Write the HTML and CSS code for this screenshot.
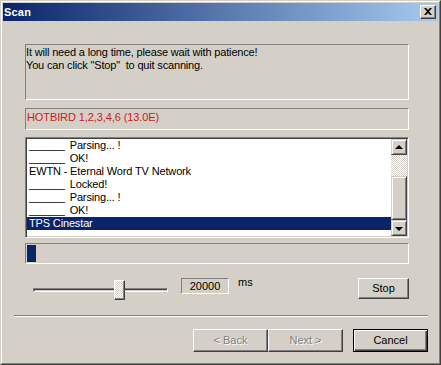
FILE: index.html
```html
<!DOCTYPE html>
<html>
<head>
<meta charset="utf-8">
<title>Scan</title>
<link rel="stylesheet" href="styles.css">
</head>
<body>
<div class="window">
  <div class="frame">
    <div class="titlebar">
      <span class="title">Scan</span>
      <div class="close">
        <svg width="8" height="7" viewBox="0 0 8 7"><path d="M0 0h2l2 2 2-2h2L5 3.5 8 7H6L4 5 2 7H0l3-3.5z" fill="#000"/></svg>
      </div>
    </div>
    <div class="client">
      <div class="content">
        <div class="static msg">It will need a long time, please wait with patience!<br>You can click "Stop"&nbsp; to quit scanning.</div>
        <div class="static sat">HOTBIRD 1,2,3,4,6 (13.0E)</div>
        <div class="list">
          <div class="items">
            <div class="item"><span class="dash">______</span> Parsing... !</div>
            <div class="item"><span class="dash">______</span> OK!</div>
            <div class="item">EWTN - Eternal Word TV Network</div>
            <div class="item"><span class="dash">______</span> Locked!</div>
            <div class="item"><span class="dash">______</span> Parsing... !</div>
            <div class="item"><span class="dash">______</span> OK!</div>
            <div class="item selected">TPS Cinestar</div>
          </div>
          <div class="scrollbar">
            <div class="sbtn"><span class="arrow up"></span></div>
            <div class="track"></div>
            <div class="thumb"></div>
            <div class="sbtn"><span class="arrow down"></span></div>
          </div>
        </div>
        <div class="static progress"><div class="block"></div></div>
        <div class="controls">
          <div class="slider">
            <div class="rail"></div>
            <div class="knob" style="left:81px"></div>
          </div>
          <div class="static edit">20000</div>
          <div class="unit">ms</div>
          <div class="btn stop">Stop</div>
        </div>
      </div>
      <div class="sep"></div>
      <div class="buttons">
        <div class="btn disabled">&lt; Back</div>
        <div class="btn disabled">Next &gt;</div>
        <div class="btn default">Cancel</div>
      </div>
    </div>
  </div>
</div>
</body>
</html>
```
FILE: styles.css
```css
html, body {
  margin: 0;
  padding: 0;
  background: #d4d0c8;
}
body {
  font-family: "Liberation Sans", Arial, sans-serif;
  font-size: 11px;
  color: #000;
}
.window {
  width: 441px;
  height: 365px;
  box-sizing: border-box;
  border: 1px solid;
  border-color: #d4d0c8 #404040 #404040 #d4d0c8;
  background: #d4d0c8;
}
.frame {
  height: 100%;
  box-sizing: border-box;
  border: 1px solid;
  border-color: #fff #808080 #808080 #fff;
  padding: 1px;
  display: flex;
  flex-direction: column;
}
.titlebar {
  height: 18px;
  margin-bottom: 1px;
  background: linear-gradient(to right, #0a246a 0%, #a6caf0 100%);
  display: flex;
  align-items: center;
  justify-content: space-between;
  padding: 0 2px 0 1px;
}
.title {
  color: #fff;
  font-weight: bold;
  font-size: 11px;
  letter-spacing: 0.2px;
}
.close {
  width: 16px;
  height: 14px;
  box-sizing: border-box;
  background: #d4d0c8;
  border: 1px solid;
  border-color: #fff #404040 #404040 #fff;
  box-shadow: inset -1px -1px #808080;
  display: flex;
  align-items: center;
  justify-content: center;
  padding: 0 1px 1px 0;
}
.close svg { display: block; }
.client {
  flex: 1;
  display: flex;
  flex-direction: column;
}
.content {
  padding: 22px 0 0 22px;
  width: 384px;
}
.static {
  box-sizing: border-box;
  border: 1px solid;
  border-color: #808080 #fff #fff #808080;
}
.msg {
  height: 56px;
  line-height: 13px;
  padding: 1px 0 0 0;
  letter-spacing: -0.17px;
}
.sat {
  margin-top: 8px;
  height: 22px;
  line-height: 13px;
  padding: 2px 0 0 1px;
  color: #d01818;
  letter-spacing: -0.1px;
}
.list {
  margin-top: 7px;
  height: 101px;
  box-sizing: border-box;
  border: 1px solid;
  border-color: #808080 #fff #fff #808080;
  box-shadow: inset 1px 1px #404040, inset -1px -1px #d4d0c8;
  background: #fff;
  display: flex;
  padding: 1px;
}
.items {
  flex: 1;
  background: #fff;
}
.item {
  height: 13px;
  line-height: 13px;
  padding-left: 2px;
  white-space: pre;
  letter-spacing: -0.15px;
}
.dash {
  margin-right: 2px;
}
.item.selected {
  background: #0a246a;
  color: #fff;
}
.scrollbar {
  width: 16px;
  display: flex;
  flex-direction: column;
}
.sbtn, .thumb {
  box-sizing: border-box;
  background: #d4d0c8;
  border: 1px solid;
  border-color: #d4d0c8 #404040 #404040 #d4d0c8;
  box-shadow: inset 1px 1px #fff, inset -1px -1px #808080;
}
.sbtn {
  height: 16px;
  display: flex;
  align-items: center;
  justify-content: center;
}
.arrow {
  width: 0;
  height: 0;
  border-left: 4px solid transparent;
  border-right: 4px solid transparent;
}
.arrow.up { border-bottom: 4px solid #000; margin-top: -1px; }
.arrow.down { border-top: 4px solid #000; margin-top: 1px; }
.track {
  height: 21px;
  background: repeating-conic-gradient(#fff 0 25%, #d4d0c8 0 50%) 0 0 / 2px 2px;
}
.thumb {
  height: 44px;
}
.progress {
  margin-top: 5px;
  height: 21px;
  padding: 1px;
}
.block {
  width: 9px;
  height: 17px;
  background: #0a246a;
}
.controls {
  margin-top: 14px;
  height: 22px;
  display: flex;
  align-items: flex-start;
}
.slider {
  position: relative;
  margin-left: 8px;
  width: 135px;
  height: 22px;
}
.rail {
  margin-top: 10px;
  height: 4px;
  box-sizing: border-box;
  border: 1px solid;
  border-color: #808080 #fff #fff #808080;
  box-shadow: inset 1px 1px #404040, inset -1px -1px #d4d0c8;
}
.knob {
  position: absolute;
  top: 2px;
  width: 11px;
  height: 20px;
  box-sizing: border-box;
  border: 1px solid;
  border-color: #fff #404040 #404040 #fff;
  box-shadow: inset -1px -1px #808080;
  background: repeating-conic-gradient(#fff 0 25%, #d4d0c8 0 50%) 0 0 / 2px 2px;
}
.edit {
  margin-left: 13px;
  width: 48px;
  height: 16px;
  line-height: 14px;
  text-align: center;
}
.unit {
  margin-left: 9px;
  line-height: 13px;
  margin-top: -2px;
}
.btn {
  box-sizing: border-box;
  background: #d4d0c8;
  border: 1px solid;
  border-color: #fff #404040 #404040 #fff;
  box-shadow: inset -1px -1px #808080;
  display: flex;
  align-items: center;
  justify-content: center;
}
.stop {
  margin-left: auto;
  width: 51px;
  height: 21px;
  padding-bottom: 1px;
}
.sep {
  margin: 15px 10px 0 11px;
  height: 2px;
  box-sizing: border-box;
  border-top: 1px solid #808080;
  border-bottom: 1px solid #fff;
}
.buttons {
  margin-top: 12px;
  padding-right: 10px;
  display: flex;
  justify-content: flex-end;
}
.buttons .btn {
  width: 75px;
  height: 23px;
  padding-bottom: 1px;
}
.btn.disabled {
  color: #808080;
  text-shadow: 1px 1px #fff;
}
.btn.default {
  margin-left: 10px;
  border: 1px solid #000;
  box-shadow: inset 1px 1px #fff, inset -1px -1px #404040, inset -2px -2px #808080;
}
```
